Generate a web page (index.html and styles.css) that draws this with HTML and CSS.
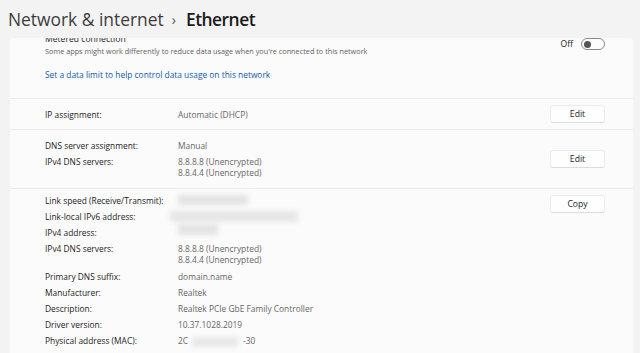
FILE: index.html
```html
<!DOCTYPE html>
<html>
<head>
<meta charset="utf-8">
<link rel="stylesheet" href="styles.css">
</head>
<body>
<div class="page">
  <header class="header">
    <span class="crumb">Network &amp; internet</span>
    <span class="chev">&#x203A;</span>
    <span class="current">Ethernet</span>
  </header>
  <main class="content">
    <section class="card card-first">
      <div class="metered">
        <div class="metered-text">
          <div class="setting-title">Metered connection</div>
          <div class="setting-desc">Some apps might work differently to reduce data usage when you're connected to this network</div>
        </div>
        <div class="toggle-wrap">
          <span class="toggle-label">Off</span>
          <span class="toggle"><span class="knob"></span></span>
        </div>
      </div>
      <a class="link" href="#">Set a data limit to help control data usage on this network</a>
    </section>

    <section class="card row-ip">
      <dl class="props">
        <dt>IP assignment:</dt><dd>Automatic (DHCP)</dd>
      </dl>
      <button class="btn">Edit</button>
    </section>

    <section class="card row-dns">
      <dl class="props">
        <dt>DNS server assignment:</dt><dd>Manual</dd>
        <dt>IPv4 DNS servers:</dt><dd>8.8.8.8 (Unencrypted)<br>8.8.4.4 (Unencrypted)</dd>
      </dl>
      <button class="btn">Edit</button>
    </section>

    <section class="card row-info">
      <dl class="props">
        <dt>Link speed (Receive/Transmit):</dt><dd><span class="blur blur-speed"></span></dd>
        <dt>Link-local IPv6 address:</dt><dd><span class="blur blur-v6"></span></dd>
        <dt>IPv4 address:</dt><dd><span class="blur blur-v4"></span></dd>
        <dt>IPv4 DNS servers:</dt><dd>8.8.8.8 (Unencrypted)<br>8.8.4.4 (Unencrypted)</dd>
        <dt class="gap">Primary DNS suffix:</dt><dd class="gap">domain.name</dd>
        <dt>Manufacturer:</dt><dd>Realtek</dd>
        <dt>Description:</dt><dd>Realtek PCIe GbE Family Controller</dd>
        <dt>Driver version:</dt><dd>10.37.1028.2019</dd>
        <dt>Physical address (MAC):</dt><dd>2C<span class="blur blur-mac"></span>-30</dd>
      </dl>
      <button class="btn">Copy</button>
    </section>
  </main>
</div>
</body>
</html>
```

FILE: styles.css
```css
* { box-sizing: border-box; }
html, body {
  margin: 0;
  height: 100%;
}
body {
  background: #f3f3f3;
  font-family: "Open Sans", "Noto Sans", sans-serif;
  color: #1b1b1b;
  overflow: hidden;
}
.page {
  display: flex;
  flex-direction: column;
  height: 353px;
}
.header {
  height: 38px;
  flex: none;
  display: flex;
  align-items: center;
  padding: 1px 0 0 8px;
  font-size: 17.4px;
  line-height: 1;
}
.crumb { color: #3c3c3c; }
.chev {
  color: #555;
  font-size: 14px;
  margin: 0 10px 0 8px;
}
.current {
  color: #1a1a1a;
  font-weight: 600;
  letter-spacing: -0.5px;
}

.content {
  width: 623px;
  margin-left: 10px;
  flex: 1;
  display: flex;
  flex-direction: column;
  background: #fbfbfb;
  border-radius: 4px 4px 0 0;
  overflow: hidden;
}
.card {
  display: flex;
  align-items: flex-start;
  justify-content: space-between;
  padding: 0 28px 0 35px;
  border-top: 1px solid #ececec;
}
.card-first {
  border-top: none;
  display: block;
  height: 60px;
}
.metered {
  display: flex;
  justify-content: space-between;
  align-items: flex-start;
}
.metered-text { margin-top: -4px; }
.setting-title {
  font-size: 8.6px;
  line-height: 11px;
  color: #1b1b1b;
}
.setting-desc {
  font-size: 7.3px;
  line-height: 12px;
  color: #5f5f5f;
}
.toggle-wrap {
  display: flex;
  align-items: center;
  gap: 8px;
}
.toggle-label {
  font-size: 8.6px;
  color: #1b1b1b;
}
.toggle {
  width: 24px;
  height: 12px;
  border: 1px solid #8a8a8a;
  border-radius: 6px;
  display: flex;
  align-items: center;
  padding-left: 2px;
  background: #fdfdfd;
}
.knob {
  width: 7px;
  height: 7px;
  border-radius: 50%;
  background: #555;
}
.link {
  display: block;
  margin-top: 12px;
  font-size: 8.4px;
  line-height: 12px;
  color: #105cad;
  text-decoration: none;
}

.props {
  margin: 0;
  display: grid;
  grid-template-columns: 133px auto;
  row-gap: 5px;
  font-size: 8.4px;
  line-height: 11px;
}
.props dt { color: #1b1b1b; }
.props dd { margin: 0; color: #666; }
.props .gap { margin-top: 1px; }

.row-ip { padding-top: 6px; padding-bottom: 6px; align-items: center; }
.row-dns { padding-top: 10px; padding-bottom: 10px; align-items: center; }
.row-info { padding-top: 6px; flex: 1; }

.btn {
  width: 55px;
  height: 18px;
  border: 1px solid #ececec;
  border-bottom-color: #dcdcdc;
  border-radius: 3px;
  background: #fefefe;
  font-family: inherit;
  font-size: 8.6px;
  color: #1b1b1b;
  padding: 0;
  flex: none;
}

.blur {
  display: inline-block;
  background: #e3e3e3;
  filter: blur(2.5px);
  vertical-align: middle;
}
.blur-speed { width: 70px; height: 10px; margin-top: -4px; }
.blur-v6 { width: 128px; height: 11px; margin-left: -8px; margin-top: -3px; background: #e6e6e6; }
.blur-v4 { width: 40px; height: 11px; margin-top: -8px; }
.blur-mac { width: 46px; height: 10px; margin: 0 5px 0 4px; background: #e8e8e8; }
```
